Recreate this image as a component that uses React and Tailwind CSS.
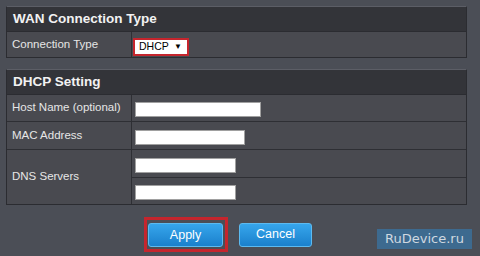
import React from 'react';

const sans = { fontFamily: '"Liberation Sans", Arial, sans-serif' };

function Label({ children }) {
    return (
        <div className="w-[125px] shrink-0 flex items-center pl-[5px] border-r border-[#2e2f34] text-[11.5px] text-[#e6e6e6]">
            {children}
        </div>
    );
}

function TextBox({ width }) {
    return <div className={`h-[15px] bg-white border border-[#a0a0a0] ${width}`}></div>;
}

function Panel({ title, children }) {
    return (
        <div className="w-[461px] border border-[#2b2c31] border-t-[#5c5e66] bg-[#494a50]">
            <div className="h-[25px] flex items-center pl-[6px] pt-[1px] bg-[#333439] border-b border-[#2b2c31] text-[13.5px] font-bold text-[#f2f2f2]">
                {title}
            </div>
            {children}
        </div>
    );
}

function BlueButton({ children, width }) {
    return (
        <button className={`${width} h-[24px] rounded-[3px] border border-[#5cbaf0] bg-gradient-to-b from-[#36a6ec] to-[#1a80cc] text-white text-[12.5px]`}>
            {children}
        </button>
    );
}

function App() {
    return (
        <div
            className="relative w-[480px] h-[256px] overflow-hidden bg-[#4b4e56] pt-[6px] pl-[6px]"
            style={sans}
        >
            <Panel title="WAN Connection Type">
                <div className="flex h-[25px]">
                    <Label>Connection Type</Label>
                    <div className="flex-1 flex items-center pl-[1px] pt-[4px]">
                        <div className="w-[56px] h-[18px] border-2 border-[#c5252d] bg-white flex items-center justify-between pl-[4px] pr-[5px]">
                            <span className="text-[10.5px] leading-none text-black">DHCP</span>
                            <span className="text-[8px] leading-none text-black">▼</span>
                        </div>
                    </div>
                </div>
            </Panel>

            <div className="h-[11px]"></div>

            <Panel title="DHCP Setting">
                <div className="flex h-[27px] border-b border-[#2e2f34]">
                    <Label>Host Name (optional)</Label>
                    <div className="flex-1 flex items-center pl-[3px] pt-[3px]">
                        <TextBox width="w-[126px]" />
                    </div>
                </div>
                <div className="flex h-[28px] border-b border-[#2e2f34]">
                    <Label>MAC Address</Label>
                    <div className="flex-1 flex items-center pl-[3px] pt-[3px]">
                        <TextBox width="w-[110px]" />
                    </div>
                </div>
                <div className="flex">
                    <Label>DNS Servers</Label>
                    <div className="flex-1">
                        <div className="h-[28px] flex items-center pl-[3px] pt-[3px] border-b border-[#2e2f34]">
                            <TextBox width="w-[101px]" />
                        </div>
                        <div className="h-[26px] flex items-center pl-[3px] pt-[3px]">
                            <TextBox width="w-[101px]" />
                        </div>
                    </div>
                </div>
            </Panel>

            <div className="flex mt-[12px] ml-[138px] items-center gap-[11px]">
                <div className="pl-[1px] pr-[2px] py-[2px] border-[3px] border-[#c5252d]">
                    <BlueButton width="w-[75px]">Apply</BlueButton>
                </div>
                <BlueButton width="w-[73px]">Cancel</BlueButton>
            </div>

            <div
                className="absolute left-[377px] top-[229px] w-[95px] h-[20px] bg-[#3d6a8f] flex items-center justify-center text-[13px] text-[#cfd8e0]"
                style={{ fontFamily: '"DejaVu Sans", sans-serif' }}
            >
                RuDevice.ru
            </div>
        </div>
    );
}

export default App;
